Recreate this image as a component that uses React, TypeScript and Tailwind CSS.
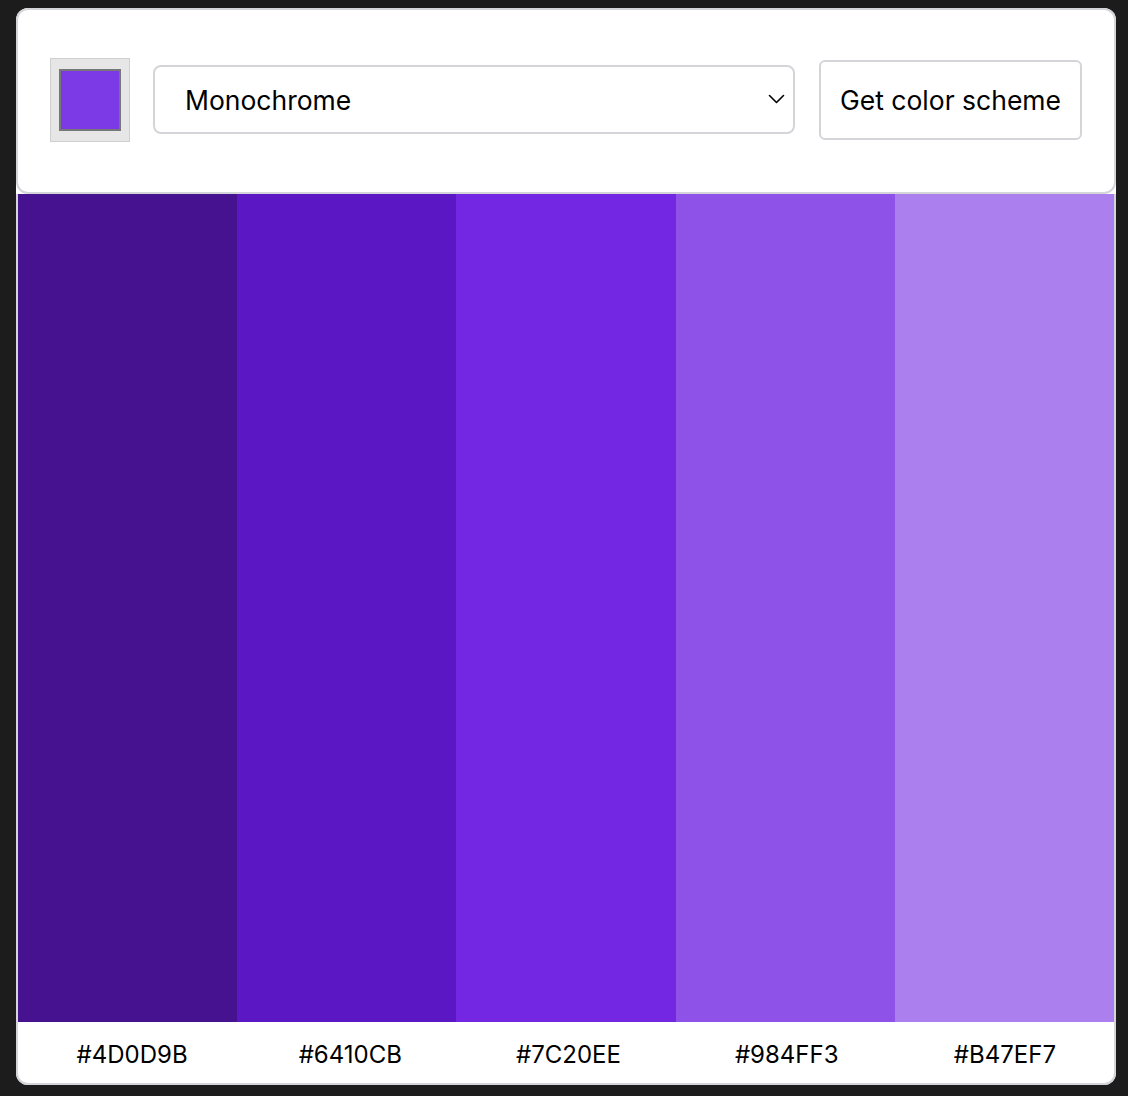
const scheme = [
  { hex: "#4D0D9B", shown: "#46128f" },
  { hex: "#6410CB", shown: "#5a17c3" },
  { hex: "#7C20EE", shown: "#7327e3" },
  { hex: "#984FF3", shown: "#8e52e9" },
  { hex: "#B47EF7", shown: "#ab80ee" },
];

export default function App() {
  return (
    <div className="min-h-[1096px] bg-[#1c1c1c] pl-4 pt-2 font-['Inter',sans-serif] text-black">
      <div className="w-[1100px] rounded-xl bg-white">
        {/* header with the controls */}
        <div className="flex h-[186px] items-center rounded-xl border-2 border-[#d4d5d9] bg-white pb-[2px] pl-8 pr-[30px]">
          <div className="flex h-[84px] w-[80px] items-center justify-center border border-[#cfcfcf] bg-[#e6e6e6]">
            <div className="h-[62px] w-[62px] border-2 border-[#777] bg-[#7b3ae6]" />
          </div>

          <div className="relative mb-[2px] ml-[23px] h-[69px] w-[642px]">
            <select
              defaultValue="monochrome"
              className="h-full w-full appearance-none rounded-lg border-2 border-[#d4d5d9] bg-white pl-[30px] pt-[4px] text-[26.5px] outline-none"
            >
              <option value="monochrome">Monochrome</option>
              <option value="monochrome-dark">Monochrome-dark</option>
              <option value="monochrome-light">Monochrome-light</option>
              <option value="analogic">Analogic</option>
              <option value="complement">Complement</option>
            </select>
            <svg
              className="pointer-events-none absolute right-[10px] top-1/2 -translate-y-1/2"
              width="17"
              height="10"
              viewBox="0 0 17 10"
              fill="none"
              stroke="currentColor"
              strokeWidth="1.6"
              strokeLinecap="round"
              strokeLinejoin="round"
            >
              <polyline points="1.5,1.5 8.5,8.5 15.5,1.5" />
            </svg>
          </div>

          <button
            type="button"
            className="ml-6 h-[80px] w-[263px] rounded-md border-2 border-[#d4d5d9] bg-white pt-[2px] text-[26.5px]"
          >
            Get color scheme
          </button>
        </div>

        {/* colour columns */}
        <div className="overflow-hidden rounded-b-xl border-x-2 border-b-2 border-[#d4d5d9]">
          <div className="grid h-[828px] grid-cols-5">
            {scheme.map((c) => (
              <div key={c.hex} style={{ backgroundColor: c.shown }} />
            ))}
          </div>
          <div className="grid h-[61px] grid-cols-5 pl-[5px]">
            {scheme.map((c) => (
              <div key={c.hex} className="flex items-center justify-center pt-1 text-[24px]">
                {c.hex}
              </div>
            ))}
          </div>
        </div>
      </div>
    </div>
  );
}
